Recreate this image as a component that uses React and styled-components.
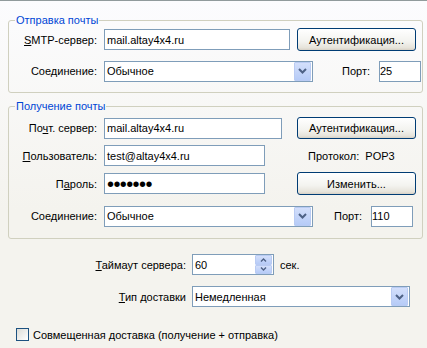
import React from 'react';
import styled, { createGlobalStyle } from 'styled-components';

const GlobalStyle = createGlobalStyle`
  html, body {
    margin: 0;
    padding: 0;
    width: 427px;
    height: 348px;
    overflow: hidden;
    background: #f4f3ee;
  }
  * { box-sizing: border-box; }
`

const Page = styled.div`
  width: 427px;
  height: 348px;
  border-top: 1px solid #919b9c;
  padding-top: 13px;
  background: linear-gradient(#fcfcfe, #f4f3ee 60%);
  font-family: "Liberation Sans", Arial, sans-serif;
  font-size: 11px;
  color: #000;
`

const Group = styled.fieldset`
  margin: ${p => p.$mt || 0}px 4px 0 8px;
  padding: 0 0 ${p => p.$pb}px 0;
  border: 1px solid #d0d0bf;
  border-radius: 3px;
  min-width: 0;
`

const Title = styled.legend`
  margin-left: 6px;
  padding: 0 1px;
  line-height: 13px;
  color: #0046d5;
`

const Row = styled.div`
  display: flex;
  align-items: center;
  height: ${p => p.$h || 23}px;
  margin-top: ${p => p.$mt || 0}px;
  padding-left: ${p => p.$pl || 0}px;
`

const Label = styled.label`
  width: ${p => p.$w || 88}px;
  margin-right: ${p => p.$gap ?? 7}px;
  text-align: right;
  white-space: nowrap;
`

const Side = styled.span`
  margin-left: ${p => p.$ml}px;
  margin-right: ${p => p.$mr || 0}px;
  white-space: nowrap;
`

const U = styled.span`
  text-decoration: underline;
  text-underline-offset: 1px;
`

const Field = styled.div`
  width: ${p => p.$w}px;
  height: 21px;
  margin-left: ${p => p.$ml || 0}px;
  border: 1px solid #7f9db9;
  background: #fff;
  padding-left: ${p => p.$pad ?? 2}px;
  display: flex;
  align-items: center;
  white-space: nowrap;
  overflow: hidden;
`

const Dots = styled.span`
  font-size: 20px;
  line-height: 17px;
  letter-spacing: -0.6px;
  margin-top: 1px;
`

const Button = styled.button`
  width: 119px;
  height: ${p => p.$h || 23}px;
  margin-left: ${p => p.$ml || 0}px;
  border: 1px solid #003c74;
  border-radius: 3px;
  background: linear-gradient(#ffffff, #f3f3ef 60%, #e6e3da 90%, #d6d0c5);
  font: inherit;
  color: #000;
  padding: 0;
  text-align: center;
`

const Combo = styled(Field)`
  padding-right: 1px;
  justify-content: space-between;
`

const ArrowBox = styled.span`
  width: 17px;
  height: 19px;
  border: 1px solid #b9cbf3;
  border-radius: 1px;
  background: linear-gradient(#d3dffb, #b6cbf7);
  display: flex;
  align-items: center;
  justify-content: center;
`

const SpinBox = styled.span`
  width: 17px;
  height: 19px;
  display: flex;
  flex-direction: column;
`

const SpinHalf = styled.span`
  flex: 1;
  border: 1px solid #b9cbf3;
  border-radius: 1px;
  background: linear-gradient(#d3dffb, #b6cbf7);
  display: flex;
  align-items: center;
  justify-content: center;
`

const Box = styled.span`
  width: 13px;
  height: 13px;
  border: 1px solid #1c5180;
  background: linear-gradient(135deg, #dcdcd7, #ffffff);
  margin-left: 16px;
  margin-right: 4px;
`

const Chevron = () => (
  <svg width="9" height="6" viewBox="0 0 9 6">
    <path d="M1 1 L4.5 4.5 L8 1" fill="none" stroke="#4d6185" strokeWidth="2" />
  </svg>
)

const Spin = ({ up }) => (
  <svg width="7" height="4" viewBox="0 0 7 4">
    <path d={up ? 'M1 3.5 L3.5 1 L6 3.5' : 'M1 0.5 L3.5 3 L6 0.5'} fill="none" stroke="#4d6185" strokeWidth="1.4" />
  </svg>
)

const Select = ({ w, ml, children }) => (
  <Combo $w={w} $ml={ml}>
    <span>{children}</span>
    <ArrowBox><Chevron /></ArrowBox>
  </Combo>
)

const App = () => {
  return (
    <Page>
      <GlobalStyle />
      <Group $pb={10}>
        <Title>Отправка почты</Title>
        <Row $mt={1}>
          <Label><U>S</U>MTP-сервер:</Label>
          <Field $w={186}>mail.altay4x4.ru</Field>
          <Button $ml={7}>Аутентификация...</Button>
        </Row>
        <Row $mt={9} $h={22}>
          <Label>Соединение:</Label>
          <Select w={209}>Обычное</Select>
          <Side $ml={29} $mr={9}>Порт:</Side>
          <Field $w={42} $pad={0}>25</Field>
        </Row>
      </Group>

      <Group $mt={7} $pb={11}>
        <Title>Получение почты</Title>
        <Row $mt={4} $h={22}>
          <Label>По<U>ч</U>т. сервер:</Label>
          <Field $w={178}>mail.altay4x4.ru</Field>
          <Button $ml={15} $h={22}>Аутентификация...</Button>
        </Row>
        <Row $mt={6} $h={21}>
          <Label><U>П</U>ользователь:</Label>
          <Field $w={161}>test@altay4x4.ru</Field>
          <Side $ml={43}>Протокол:&nbsp; POP3</Side>
        </Row>
        <Row $mt={6}>
          <Label>П<U>а</U>роль:</Label>
          <Field $w={161}><Dots>•••••••</Dots></Field>
          <Button $ml={32}>Изменить...</Button>
        </Row>
        <Row $mt={10} $h={22}>
          <Label>Соединение:</Label>
          <Select w={209}>Обычное</Select>
          <Side $ml={21} $mr={9}>Порт:</Side>
          <Field $w={42} $pad={0}>110</Field>
        </Row>
      </Group>

      <Row $mt={15} $h={21} $pl={8}>
        <Label $w={178} $gap={6}><U>Т</U>аймаут сервера:</Label>
        <Combo $w={82} $pad={2}>
          <span>60</span>
          <SpinBox>
            <SpinHalf><Spin up /></SpinHalf>
            <SpinHalf><Spin /></SpinHalf>
          </SpinBox>
        </Combo>
        <Side $ml={6}>сек.</Side>
      </Row>
      <Row $mt={11} $h={21} $pl={8}>
        <Label $w={178} $gap={6}><U>Т</U>ип доставки</Label>
        <Select w={218}>Немедленная</Select>
      </Row>
      <Row $mt={21} $h={13}>
        <Box />
        <span>Совмещенная доставка (получение + отправка)</span>
      </Row>
    </Page>
  )
}

export default App
